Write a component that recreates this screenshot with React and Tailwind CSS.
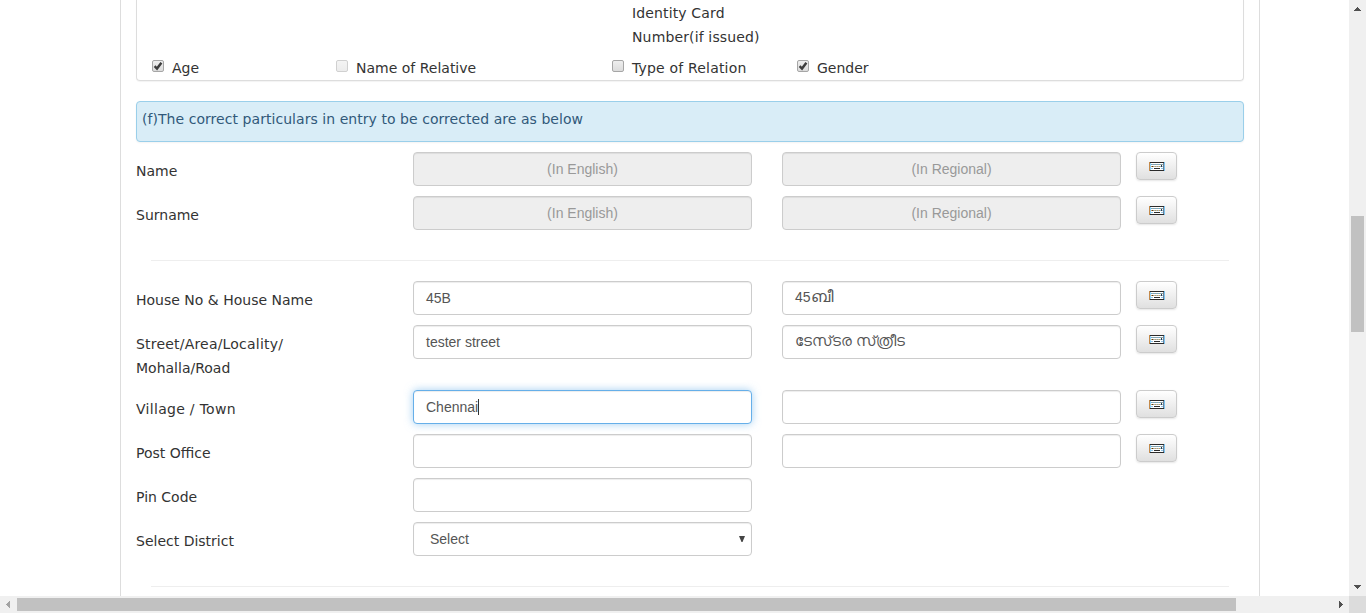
import React from "react";

function KeyboardIcon() {
  return (
    <svg width="16" height="10" viewBox="0 0 16 10" shapeRendering="crispEdges">
      <rect x="0" y="0" width="16" height="9" fill="#fff" />
      <rect x="0" y="0" width="1" height="9" fill="#c58a4a" />
      <rect x="15" y="0" width="1" height="9" fill="#7cc4ee" />
      <rect x="1" y="1" width="1" height="7" fill="#8fd0f5" />
      <rect x="14" y="1" width="1" height="7" fill="#6b7f96" />
      <rect x="1" y="0" width="14" height="1" fill="#2b2b2b" />
      <rect x="1" y="8" width="14" height="1" fill="#2b2b2b" />
      {[2, 4, 6, 8, 10, 12].map((x) => (
        <g key={x}>
          <rect x={x} y="2" width="1" height="1" fill="#5fa9d8" />
          <rect x={x + 1} y="2" width="1" height="1" fill="#a9a38f" />
          <rect x={x} y="4" width="1" height="1" fill="#d09a50" />
          <rect x={x + 1} y="4" width="1" height="1" fill="#8cbcd8" />
        </g>
      ))}
      <rect x="12" y="3" width="1" height="2" fill="#3b3b3b" />
      <rect x="3" y="4" width="1" height="1" fill="#3b3b3b" />
      <rect x="2" y="6" width="2" height="1" fill="#8fc4e6" />
      <rect x="5" y="6" width="6" height="1" fill="#2b2b2b" />
      <rect x="12" y="6" width="2" height="1" fill="#8fc4e6" />
    </svg>
  );
}

function KeyboardButton() {
  return (
    <button className="ml-[15px] flex h-[28px] w-[41px] shrink-0 items-center justify-center rounded-[4px] border border-[#ccc] bg-linear-to-b from-white to-[#e0e0e0] pt-px pl-px shadow-[0_1px_2px_rgba(0,0,0,0.1)]">
      <KeyboardIcon />
    </button>
  );
}

function Check({ on, disabled, className }) {
  return (
    <span
      className={
        "flex h-[12px] w-[12px] shrink-0 items-center justify-center rounded-[2px] border bg-linear-to-b " +
        (disabled ? "border-[#d0d0d0] from-[#f4f4f4] to-[#ececec] " : "border-[#a6a6a6] from-[#eeeeee] to-[#dcdcdc] ") +
        className
      }
    >
      {on && (
        <svg width="10" height="10" viewBox="0 0 10 10" className="shrink-0">
          <path d="M1.6 5.2 L4 7.6 L8.4 1.8" fill="none" stroke="#3d3d3d" strokeWidth="2.4" />
        </svg>
      )}
    </span>
  );
}

function Field({ value, disabled, focused, className = "" }) {
  const tone = disabled
    ? "justify-center border-[#ccc] bg-[#eee] text-[#999] shadow-[inset_0_1px_1px_rgba(0,0,0,0.075)]"
    : focused
      ? "border-[#66afe9] bg-white text-[#555] shadow-[inset_0_1px_1px_rgba(0,0,0,0.075),0_0_8px_rgba(102,175,233,0.6)]"
      : "border-[#ccc] bg-white text-[#555] shadow-[inset_0_1px_1px_rgba(0,0,0,0.075)]";
  return (
    <div
      className={
        "flex h-[34px] w-[339px] shrink-0 items-center rounded-[4px] border px-[12px] font-['Liberation_Sans',Arial,sans-serif] text-[14px] leading-[20px] tracking-normal whitespace-nowrap " +
        tone + " " + className
      }
    >
      {value}
      {focused && <span className="h-[16px] w-px bg-[#333]" />}
    </div>
  );
}

function Row({ label, children, className = "h-[44px]" }) {
  return (
    <div className={"flex items-start " + className}>
      <div className="w-[277px] shrink-0 pt-[7px]">{label}</div>
      {children}
    </div>
  );
}

export default function App() {
  return (
    <div className="flex h-[613px] w-[1366px] flex-col overflow-hidden bg-white font-['DejaVu_Sans',sans-serif] text-[14px] leading-[24px] text-[#333]">
      <div className="flex h-[596px]">
        <div className="flex w-[1349px] overflow-hidden pl-[120px]">
          <main className="h-[596px] w-[1140px] shrink-0 overflow-hidden border-x border-[#ddd] px-[15px]">
            <section className="flex h-[81px] w-[1108px] flex-col rounded-b-[4px] border border-t-0 border-[#ddd] pl-[15px] shadow-[0_1px_1px_rgba(0,0,0,0.05)]">
              <div className="h-[55px] pl-[480px] pt-px tracking-[0.14px]">
                Identity Card
                <br />
                Number(if issued)
              </div>
              <div className="flex h-[25px] pt-px">
                <div className="flex w-[184px]"><Check on className="mt-[4px] mr-[8px]" />Age</div>
                <div className="flex w-[276px]"><Check disabled className="mt-[4px] mr-[8px]" />Name of Relative</div>
                <div className="flex w-[185px] tracking-[0.18px]"><Check className="mt-[4px] mr-[8px]" />Type of Relation</div>
                <div className="flex"><Check on className="mt-[4px] mr-[8px]" />Gender</div>
              </div>
            </section>

            <div className="mt-[20px] h-[41px] w-[1108px] rounded-[4px] border border-[#9acfea] bg-[#d9edf7] px-[5px] pt-[5px] tracking-[0.05px] text-[#31597a] shadow-[0_1px_2px_rgba(0,0,0,0.05)]">
              (f)The correct particulars in entry to be corrected are as below
            </div>

            <div className="mt-[10px]">
              {["Name", "Surname"].map((label) => (
                <Row key={label} label={label}>
                  <Field disabled value="(In English)" />
                  <Field disabled value="(In Regional)" className="ml-[30px]" />
                  <KeyboardButton />
                </Row>
              ))}
            </div>
            <hr className="mx-[15px] mt-[20px] mb-[20px] border-[#eee]" />
            <Row label="House No & House Name">
              <Field value="45B" />
              <Field value={<span className="pb-[2px]">45<span className="text-[16px]">ബീ</span></span>} className="ml-[30px]" />
              <KeyboardButton />
            </Row>
            <Row label={<><span className="tracking-[0.2px]">Street/Area/Locality/</span><br />Mohalla/Road</>} className="h-[65px]">
              <Field value="tester street" />
              <Field value={<span className="pb-[2px] text-[14.8px]">{"ടേസ്\u200cടര സ്\u200cത്രീട"}</span>} className="ml-[30px]" />
              <KeyboardButton />
            </Row>
            <Row label={<span className="tracking-[0.3px]">Village / Town</span>}>
              <Field focused value="Chennai" />
              <Field className="ml-[30px]" />
              <KeyboardButton />
            </Row>
            <Row label="Post Office">
              <Field />
              <Field className="ml-[30px]" />
              <KeyboardButton />
            </Row>
            <Row label="Pin Code"><Field /></Row>
            <Row label="Select District">
              <div className="flex h-[34px] w-[339px] items-center justify-between rounded-[4px] border border-[#ccc] bg-white pr-[6px] pl-[16px] font-['Liberation_Sans',Arial,sans-serif] tracking-normal text-[#555] shadow-[inset_0_1px_1px_rgba(0,0,0,0.075)]">
                Select
                <svg width="6" height="6" viewBox="0 0 6 6"><path d="M0 0H6L3.5 6H2.5Z" fill="#444" /></svg>
              </div>
            </Row>
            <hr className="mx-[15px] mt-[20px] border-[#eee]" />
          </main>
        </div>
        <div className="flex w-[17px] flex-col items-center bg-[#f0f0f0]">
          <svg width="17" height="17" shapeRendering="crispEdges"><path d="M8 7h1v1h1v1h1v1h1v1H5v-1h1v-1h1v-1h1z" fill="#505050" /></svg>
          <div className="mt-[199px] h-[116px] w-[13px] bg-[#c1c1c1]" />
          <svg width="17" height="17" className="mt-auto" shapeRendering="crispEdges"><path d="M5 6h7v1h-1v1h-1v1H9v1H8V9H7V8H6V7H5z" fill="#505050" /></svg>
        </div>
      </div>
      <div className="flex h-[17px] items-center bg-[#f0f0f0]">
        <svg width="17" height="17" shapeRendering="crispEdges"><path d="M10 5v7H9v-1H8v-1H7V9H6V8h1V7h1V6h1V5z" fill="#a3a3a3" /></svg>
        <div className="h-[13px] w-[1219px] bg-[#c1c1c1]" />
        <svg width="17" height="17" className="ml-auto" shapeRendering="crispEdges"><path d="M7 5v7h1v-1h1v-1h1V9h1V8h-1V7H9V6H8V5z" fill="#505050" /></svg>
        <div className="h-[17px] w-[17px] bg-[#dcdcdc]" />
      </div>
    </div>
  );
}
